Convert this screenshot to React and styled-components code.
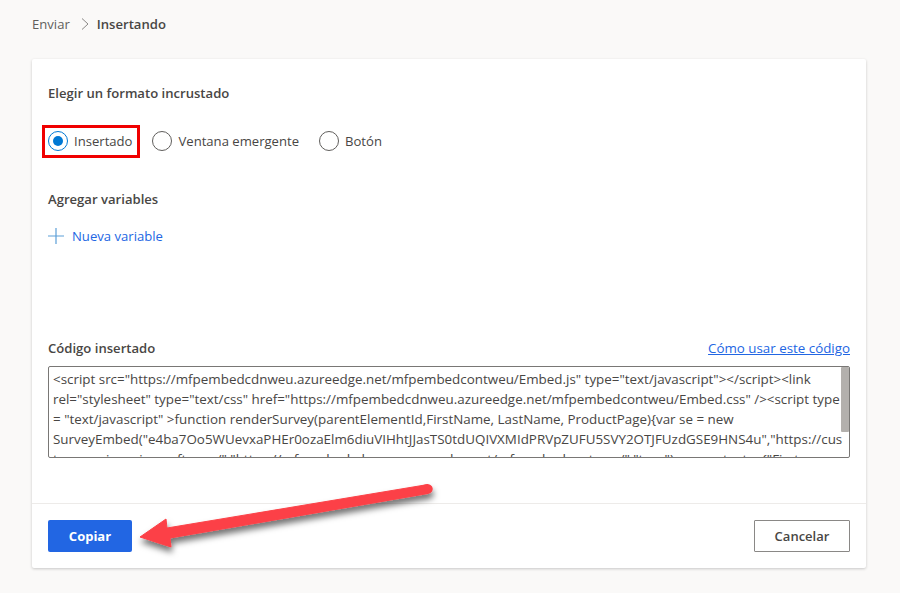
import React from 'react';
import styled, { createGlobalStyle } from 'styled-components';

const FONT = `"Open Sans", "Noto Sans", "Liberation Sans", sans-serif`;

const EMBED_CODE = `<script src="https://mfpembedcdnweu.azureedge.net/mfpembedcontweu/Embed.js" type="text/javascript"></script><link rel="stylesheet" type="text/css" href="https://mfpembedcdnweu.azureedge.net/mfpembedcontweu/Embed.css" /><script type = "text/javascript" >function renderSurvey(parentElementId,FirstName, LastName, ProductPage){var se = new SurveyEmbed("e4ba7Oo5WUevxaPHEr0ozaElm6diuVIHhtJJasTS0tdUQIVXMIdPRVpZUFU5SVY2OTJFUzdGSE9HNS4u","https://customervoice.microsoft.com/","https://mfpembedcdnweu.azureedge.net/mfpembedcontweu/","true");var context = {"First Name": FirstName,"Last Name": LastName,"Product Page": ProductPage,};se.renderInline(parentElementId, context);}</script>`;

const GlobalStyle = createGlobalStyle`
  html, body {
    margin: 0;
    padding: 0;
    background: #faf9f8;
  }
  body {
    font-family: ${FONT};
    color: #323130;
  }
`;

const Page = styled.div`
  position: relative;
  width: 900px;
  height: 593px;
  box-sizing: border-box;
  padding: 14px 34px 25px 32px;
  display: flex;
  flex-direction: column;
  overflow: hidden;
`;

const Breadcrumb = styled.nav`
  display: flex;
  align-items: center;
  height: 20px;
  font-size: 13.1px;
  margin-bottom: 25px;
`;

const Crumb = styled.span`
  color: ${props => (props.$current ? '#484644' : '#605e5c')};
  font-weight: ${props => (props.$current ? 600 : 400)};
`;

const CrumbChevron = styled.svg`
  width: 8px;
  height: 12px;
  margin: 0 8px 0 11px;
  fill: none;
  stroke: #8a8886;
  stroke-width: 1;
`;

const Card = styled.section`
  flex: 1;
  display: flex;
  flex-direction: column;
  background: #fff;
  border-radius: 2px;
  box-shadow: 0 1px 3px rgba(0, 0, 0, 0.2);
`;

const CardBody = styled.div`
  flex: 1;
  display: flex;
  flex-direction: column;
  padding: 25px 16px 0;
`;

const SectionTitle = styled.h2`
  margin: 0;
  font-size: 13.1px;
  line-height: 18px;
  font-weight: 600;
  color: #484644;
`;

const RadioGroup = styled.div`
  display: flex;
  align-items: center;
  margin-top: 29px;
  height: 20px;
`;

const RadioOption = styled.label`
  position: relative;
  display: flex;
  align-items: center;
  gap: 6px;
  margin-right: ${props => props.$gap || 0}px;
  font-size: 13.1px;
  color: #484644;
`;

const RadioCircle = styled.span`
  width: 20px;
  height: 20px;
  box-sizing: border-box;
  border-radius: 50%;
  border: 1px solid ${props => (props.$checked ? '#0078d4' : '#605e5c')};
  display: flex;
  align-items: center;
  justify-content: center;

  &::after {
    content: '';
    display: ${props => (props.$checked ? 'block' : 'none')};
    width: 10px;
    height: 10px;
    border-radius: 50%;
    background: #0078d4;
  }
`;

const Highlight = styled.span`
  position: absolute;
  left: -6px;
  top: -6px;
  width: 98px;
  height: 33px;
  box-sizing: border-box;
  border: 3px solid #f00000;
`;

const VariablesSection = styled.div`
  margin-top: 39px;
`;

const AddVariable = styled.button`
  display: flex;
  align-items: center;
  gap: 8px;
  margin-top: 18px;
  padding: 0;
  border: none;
  background: none;
  font-family: inherit;
  font-size: 13.1px;
  line-height: 20px;
  color: #2266e3;
`;

const PlusIcon = styled.svg`
  width: 16px;
  height: 16px;
  stroke: #5c9fd8;
  stroke-width: 1.2;
  fill: none;
`;

const CodeHeader = styled.div`
  display: flex;
  align-items: center;
  justify-content: space-between;
  margin-top: auto;
  height: 18px;
`;

const HelpLink = styled.a`
  font-size: 13.35px;
  color: #2266e3;
  text-decoration: underline;
`;

const CodeWrap = styled.div`
  position: relative;
  margin: 9px 0 45px;
`;

const CodeBox = styled.textarea`
  display: block;
  width: 100%;
  height: 92px;
  box-sizing: border-box;
  padding: 2px 6px 0 4px;
  border: 1px solid #797775;
  border-radius: 2px;
  font-family: ${FONT};
  font-size: 13.4px;
  line-height: 20px;
  color: #484644;
  background: #fff;
  resize: none;
  outline: none;
  overflow: hidden;
`;

const ScrollThumb = styled.span`
  position: absolute;
  top: 1px;
  right: 1px;
  width: 8px;
  height: 65px;
  background: #b3b0ad;
  border-radius: 1px;
`;

const CardFooter = styled.footer`
  display: flex;
  justify-content: space-between;
  padding: 16px 16px;
  border-top: 1px solid #edebe9;
`;

const PrimaryButton = styled.button`
  width: 84px;
  height: 32px;
  border: none;
  border-radius: 2px;
  background: #2266e3;
  color: #fff;
  font-family: inherit;
  font-size: 13px;
  font-weight: 700;
`;

const SecondaryButton = styled.button`
  width: 96px;
  height: 32px;
  border: 1px solid #8a8886;
  border-radius: 1px;
  background: #fff;
  color: #484644;
  font-family: inherit;
  font-size: 13px;
  font-weight: 600;
`;

const ArrowOverlay = styled.svg`
  position: absolute;
  left: 130px;
  top: 475px;
  width: 320px;
  height: 90px;
  pointer-events: none;
  overflow: visible;
`;

function Arrow() {
  return (
    <ArrowOverlay viewBox="0 0 320 90">
      <defs>
        <filter id="arrowShadow" x="-10%" y="-30%" width="120%" height="170%">
          <feDropShadow dx="1" dy="5" stdDeviation="3" floodColor="#000" floodOpacity="0.55" />
        </filter>
      </defs>
      <g filter="url(#arrowShadow)">
        <path
          d="M10 62 L36 44 L37 53 L298 9.5 L298 18.5 L40 63 L41 72 Z"
          fill="#fc4147"
          stroke="#fc4147"
          strokeWidth="1"
          strokeLinejoin="round"
        />
        <line x1="296" y1="14.3" x2="298" y2="14" stroke="#fc4147" strokeWidth="9.5" strokeLinecap="round" />
      </g>
    </ArrowOverlay>
  );
}

export default function App() {
  return (
    <>
      <GlobalStyle />
      <Page>
        <Breadcrumb>
          <Crumb>Enviar</Crumb>
          <CrumbChevron viewBox="0 0 8 12">
            <path d="M1 0.5 L7 6 L1 11.5" />
          </CrumbChevron>
          <Crumb $current>Insertando</Crumb>
        </Breadcrumb>

        <Card>
          <CardBody>
            <SectionTitle>Elegir un formato incrustado</SectionTitle>
            <RadioGroup>
              <RadioOption $gap={20}>
                <RadioCircle $checked />
                Insertado
                <Highlight />
              </RadioOption>
              <RadioOption $gap={20}>
                <RadioCircle />
                Ventana emergente
              </RadioOption>
              <RadioOption>
                <RadioCircle />
                Botón
              </RadioOption>
            </RadioGroup>

            <VariablesSection>
              <SectionTitle>Agregar variables</SectionTitle>
              <AddVariable>
                <PlusIcon viewBox="0 0 16 16">
                  <path d="M8 0 V16 M0 8 H16" />
                </PlusIcon>
                Nueva variable
              </AddVariable>
            </VariablesSection>

            <CodeHeader>
              <SectionTitle>Código insertado</SectionTitle>
              <HelpLink href="#">Cómo usar este código</HelpLink>
            </CodeHeader>
            <CodeWrap>
              <CodeBox readOnly value={EMBED_CODE} />
              <ScrollThumb />
            </CodeWrap>
          </CardBody>
          <CardFooter>
            <PrimaryButton>Copiar</PrimaryButton>
            <SecondaryButton>Cancelar</SecondaryButton>
          </CardFooter>
        </Card>
        <Arrow />
      </Page>
    </>
  );
}
